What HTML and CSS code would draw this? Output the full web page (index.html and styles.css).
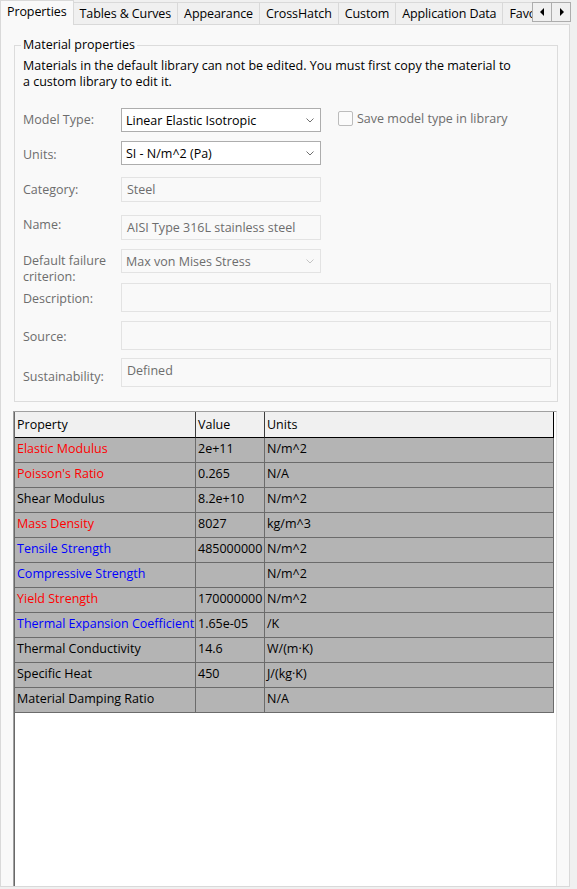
FILE: index.html
```html
<!DOCTYPE html>
<html>
<head>
<meta charset="utf-8">
<title>Material</title>
<link rel="stylesheet" href="styles.css">
</head>
<body>
<div class="window">
  <div class="tabbar">
    <div class="tab active">Properties</div>
    <div class="tab">Tables &amp; Curves</div>
    <div class="tab">Appearance</div>
    <div class="tab">CrossHatch</div>
    <div class="tab">Custom</div>
    <div class="tab">Application Data</div>
    <div class="tab">Favorites</div>
    <div class="scroller">
      <span class="sbtn"><svg width="5" height="8" viewBox="0 0 5 8"><path d="M4 0 L0 4 L4 8 Z" fill="#000"/></svg></span>
      <span class="sbtn"><svg width="5" height="8" viewBox="0 0 5 8"><path d="M1 0 L5 4 L1 8 Z" fill="#000"/></svg></span>
    </div>
  </div>
  <div class="page">
    <fieldset class="group">
      <legend>Material properties</legend>
      <div class="group-body">
        <p class="note">Materials in the default library can not be edited. You must first copy the material to<br>a custom library to edit it.</p>
        <div class="form">
          <div class="row row-model">
            <span class="lbl">Model Type:</span>
            <div class="combo"><span>Linear Elastic Isotropic</span><svg class="chev" width="8" height="5" viewBox="0 0 8 5"><path d="M0.5 0.5 L4 4 L7.5 0.5" fill="none" stroke="#707070" stroke-width="1"/></svg></div>
            <label class="check"><span class="box"></span>Save model type in library</label>
          </div>
          <div class="row row-units">
            <span class="lbl lbl-low">Units:</span>
            <div class="combo"><span>SI - N/m^2 (Pa)</span><svg class="chev" width="8" height="5" viewBox="0 0 8 5"><path d="M0.5 0.5 L4 4 L7.5 0.5" fill="none" stroke="#707070" stroke-width="1"/></svg></div>
          </div>
          <div class="row row-cat">
            <span class="lbl lbl-25">Category:</span>
            <div class="field">Steel</div>
          </div>
          <div class="row row-name">
            <span class="lbl lbl-high">Name:</span>
            <div class="field">AISI Type 316L stainless steel</div>
          </div>
          <div class="row row-fail">
            <span class="lbl lbl-two">Default failure criterion:</span>
            <div class="combo combo-off"><span>Max von Mises Stress</span><svg class="chev" width="8" height="5" viewBox="0 0 8 5"><path d="M0.5 0.5 L4 4 L7.5 0.5" fill="none" stroke="#c4c4c4" stroke-width="1"/></svg></div>
          </div>
          <div class="row row-desc">
            <span class="lbl lbl-tall">Description:</span>
            <div class="field field-wide"></div>
          </div>
          <div class="row row-src">
            <span class="lbl lbl-tall">Source:</span>
            <div class="field field-wide"></div>
          </div>
          <div class="row row-sus">
            <span class="lbl lbl-tall lbl-low2">Sustainability:</span>
            <div class="field field-wide field-top">Defined</div>
          </div>
        </div>
      </div>
    </fieldset>
    <div class="gridbox">
      <table class="props">
        <thead>
          <tr><th class="c1">Property</th><th class="c2">Value</th><th class="c3">Units</th></tr>
        </thead>
        <tbody>
          <tr><td class="red">Elastic Modulus</td><td>2e+11</td><td>N/m^2</td></tr>
          <tr><td class="red">Poisson's Ratio</td><td>0.265</td><td>N/A</td></tr>
          <tr><td>Shear Modulus</td><td>8.2e+10</td><td>N/m^2</td></tr>
          <tr><td class="red">Mass Density</td><td>8027</td><td>kg/m^3</td></tr>
          <tr><td class="blue">Tensile Strength</td><td>485000000</td><td>N/m^2</td></tr>
          <tr><td class="blue">Compressive Strength</td><td></td><td>N/m^2</td></tr>
          <tr><td class="red">Yield Strength</td><td>170000000</td><td>N/m^2</td></tr>
          <tr><td class="blue">Thermal Expansion Coefficient</td><td>1.65e-05</td><td>/K</td></tr>
          <tr><td>Thermal Conductivity</td><td>14.6</td><td>W/(m·K)</td></tr>
          <tr><td>Specific Heat</td><td>450</td><td>J/(kg·K)</td></tr>
          <tr><td>Material Damping Ratio</td><td></td><td>N/A</td></tr>
        </tbody>
      </table>
    </div>
  </div>
</div>
</body>
</html>
```

FILE: styles.css
```css
* { box-sizing: border-box; }
html, body { margin: 0; padding: 0; }
body {
  width: 577px;
  height: 889px;
  overflow: hidden;
  background: #f0f0f0;
  font-family: "Open Sans", "Noto Sans", sans-serif;
  font-size: 12.5px;
  color: #000;
}
.window {
  width: 577px;
  height: 889px;
  display: flex;
  flex-direction: column;
}

/* Tabs */
.tabbar {
  position: relative;
  flex: none;
  height: 24px;
  display: flex;
  align-items: flex-end;
}
.tab {
  flex: none;
  height: 22px;
  padding: 0 6px;
  margin-left: -1px;
  border: 1px solid #d9d9d9;
  border-bottom: none;
  background: #f0f0f0;
  font-size: 12.5px;
  letter-spacing: -0.1px;
  line-height: 22px;
  white-space: nowrap;
}
.tab.active {
  position: relative;
  z-index: 1;
  height: 25px;
  margin-left: 0;
  margin-bottom: -1px;
  background: #f9f9f9;
  line-height: 22px;
}
.scroller {
  position: absolute;
  z-index: 2;
  top: 0;
  left: 532px;
  right: 0;
  height: 24px;
  padding-top: 2px;
  background: #f0f0f0;
  display: flex;
  align-items: flex-start;
}
.sbtn {
  width: 20px;
  height: 20px;
  border: 1px solid #adadad;
  background: #f0f0f0;
  display: flex;
  align-items: center;
  justify-content: center;
}
.sbtn + .sbtn { margin-left: -1px; }

/* Page */
.page {
  flex: 1;
  width: 570px;
  margin-bottom: 2px;
  background: #f9f9f9;
  border: 1px solid #d9d9d9;
  padding: 12px 0 0 12px;
  display: flex;
  flex-direction: column;
}
.group {
  flex: none;
  width: 544px;
  margin: 0 0 0 1px;
  padding: 0 6px 14px 6px;
  border: 1px solid #dcdcdc;
  min-width: 0;
}
.group legend {
  padding: 0 2px;
  line-height: 16px;
}
.group-body { padding-left: 2px; }
.note {
  margin: 5px 0 0;
  line-height: 16px;
}

/* Form */
.form {
  margin-top: 18px;
  display: flex;
  flex-direction: column;
}
.row {
  display: flex;
  align-items: flex-start;
}
.row-model { height: 33px; }
.row-units { height: 36px; }
.row-cat { height: 38px; }
.row-name { height: 34px; }
.row-fail { height: 34px; }
.row-desc { height: 38px; }
.row-src { height: 37px; }
.row-sus { height: 29px; }

.lbl {
  flex: none;
  width: 98px;
  color: #6d6d6d;
  line-height: 24px;
}
.lbl-low { padding-top: 2px; }
.lbl-25 { line-height: 25px; }
.lbl-high { line-height: 20px; }
.lbl-two { line-height: 16px; padding-top: 4px; }
.lbl-tall { line-height: 29px; padding-top: 1px; }
.lbl-low2 { padding-top: 4px; }

.combo {
  flex: none;
  width: 200px;
  height: 24px;
  padding: 0 6px 0 4px;
  border: 1px solid #adadad;
  background: #fff;
  display: flex;
  align-items: center;
  justify-content: space-between;
}
.combo-off {
  background: #f9f9f9;
  border-color: #e3e3e3;
  color: #6d6d6d;
}
.field {
  flex: none;
  width: 200px;
  height: 25px;
  padding: 0 5px;
  border: 1px solid #e3e3e3;
  background: #f9f9f9;
  color: #6d6d6d;
  line-height: 23px;
}
.field-wide { width: 430px; height: 29px; }
.field-top { line-height: 16px; padding-top: 4px; }

.check {
  display: flex;
  align-items: center;
  height: 20px;
  margin-left: 17px;
  color: #6d6d6d;
}
.check .box {
  width: 15px;
  height: 15px;
  margin-right: 4px;
  border: 1px solid #bcbcbc;
  border-radius: 2px;
  background: #fbfbfb;
}

/* Grid */
.gridbox {
  flex: 1;
  width: 544px;
  margin-top: 9px;
  background: #fff;
  border-top: 1px solid #a0a0a0;
  border-left: 1px solid #a0a0a0;
  border-right: 1px solid #e3e3e3;
  box-shadow: inset 1px 0 0 #696969;
}
.props {
  width: 540px;
  border-collapse: separate;
  border-spacing: 0;
  border-left: 1px solid #696969;
  table-layout: fixed;
  font-size: 12.5px;
}
.props .c1 { width: 181px; }
.props .c2 { width: 69px; }
.props .c3 { width: 289px; }
.props th {
  height: 26px;
  padding: 0 2px;
  text-align: left;
  font-weight: normal;
  background: #f0f0f0;
  border-right: 1px solid #3c3c3c;
  border-bottom: 1px solid #000;
}
.props th.c3 { border-right-color: #000; }
.props td {
  height: 25px;
  padding: 0 2px 3px;
  background: #b4b4b4;
  border-right: 1px solid #6b6b6b;
  border-bottom: 1px solid #6b6b6b;
  white-space: nowrap;
  overflow: hidden;
}
.props .red { color: #f00; }
.props .blue { color: #00f; }
```
